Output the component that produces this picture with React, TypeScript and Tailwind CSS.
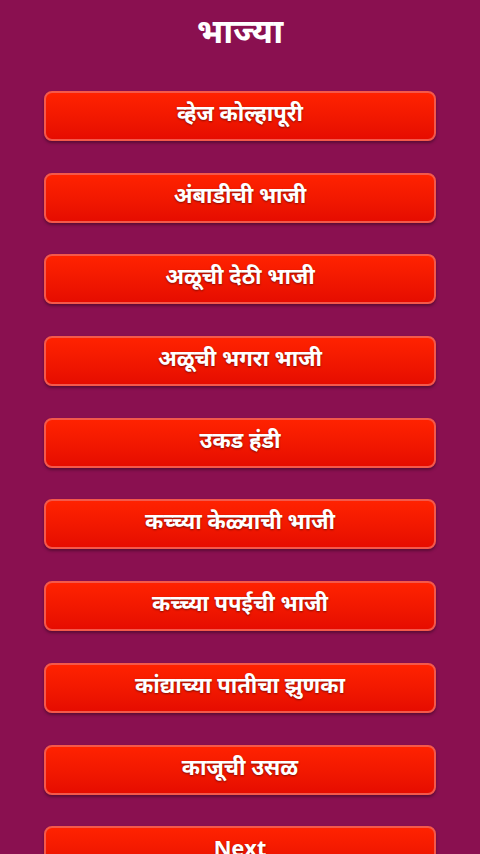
import React from "react";

const items = [
  "व्हेज कोल्हापूरी",
  "अंबाडीची भाजी",
  "अळूची देठी भाजी",
  "अळूची भगरा भाजी",
  "उकड हंडी",
  "कच्च्या केळ्याची भाजी",
  "कच्च्या पपईची भाजी",
  "कांद्याच्या पातीचा झुणका",
  "काजूची उसळ",
  "Next",
];

export default function App() {
  return (
    <div
      className="min-h-[854px] w-[480px] bg-[#8a1050] overflow-hidden"
      style={{ fontFamily: '"Noto Sans Devanagari", "Noto Sans", "Liberation Sans", sans-serif' }}
    >
      <div className="h-[854px] overflow-hidden">
        <h1 className="pt-[13px] h-[91px] text-center text-white font-bold text-[34px] leading-[44px]">
          भाज्या
        </h1>
        <div className="flex flex-col gap-[31.7px] px-[44px]">
          {items.map((t) => (
            <button
              key={t}
              className="h-[50px] w-[392px] shrink-0 rounded-[8px] border-2 border-[#f4584a] bg-gradient-to-b from-[#ff2200] to-[#e60c00] text-white font-bold text-[22px] leading-none shadow-[0_2px_3px_rgba(0,0,0,0.35)] [text-shadow:0_1px_2px_rgba(0,0,0,0.45)]"
            >
              {t}
            </button>
          ))}
        </div>
      </div>
    </div>
  );
}
